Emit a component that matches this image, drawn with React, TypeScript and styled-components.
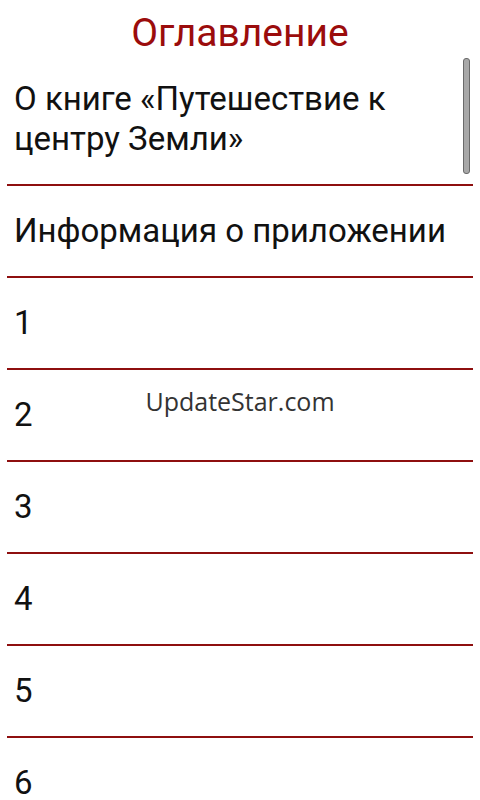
import React from "react";
import styled, { createGlobalStyle } from "styled-components";

const GlobalStyle = createGlobalStyle`
    html, body {
        margin: 0;
        padding: 0;
        background: #ffffff;
    }
    body {
        font-family: Roboto, "Noto Sans", sans-serif;
    }
`;

const Screen = styled.div`
    position: relative;
    width: 480px;
    height: 800px;
    overflow: hidden;
    background: #ffffff;
`;

const Title = styled.h1`
    margin: 0;
    padding: 13px 0 0 0;
    height: 54px;
    box-sizing: border-box;
    text-align: center;
    font-weight: 400;
    font-size: 39px;
    line-height: 40px;
    color: #9b0c0c;
`;

const List = styled.div`
    display: flex;
    flex-direction: column;
    padding: 0 7px;
`;

const Row = styled.div`
    padding: 25px 7px;
    font-size: 33px;
    line-height: 40px;
    color: #111111;
    border-bottom: 2px solid #8e0f0f;
`;

const ScrollThumb = styled.div`
    position: absolute;
    top: 58px;
    right: 10px;
    width: 5px;
    height: 114px;
    border-radius: 3px;
    background: #a8a8a8;
    border: 1px solid #6a6a6a;
`;

const Watermark = styled.div`
    position: absolute;
    top: 384px;
    left: 0;
    right: 0;
    text-align: center;
    font-family: "Open Sans", "Noto Sans", sans-serif;
    font-size: 25px;
    color: #333333;
`;

const items = [
    "О книге «Путешествие к центру Земли»",
    "Информация о приложении",
    "1", "2", "3", "4", "5", "6", "7",
];

export default function App() {
    return <Screen>
        <GlobalStyle />
        <Title>Оглавление</Title>
        <List>
            {items.map((text) => <Row key={text}>{text}</Row>)}
        </List>
        <ScrollThumb />
        <Watermark>UpdateStar.com</Watermark>
    </Screen>;
}
